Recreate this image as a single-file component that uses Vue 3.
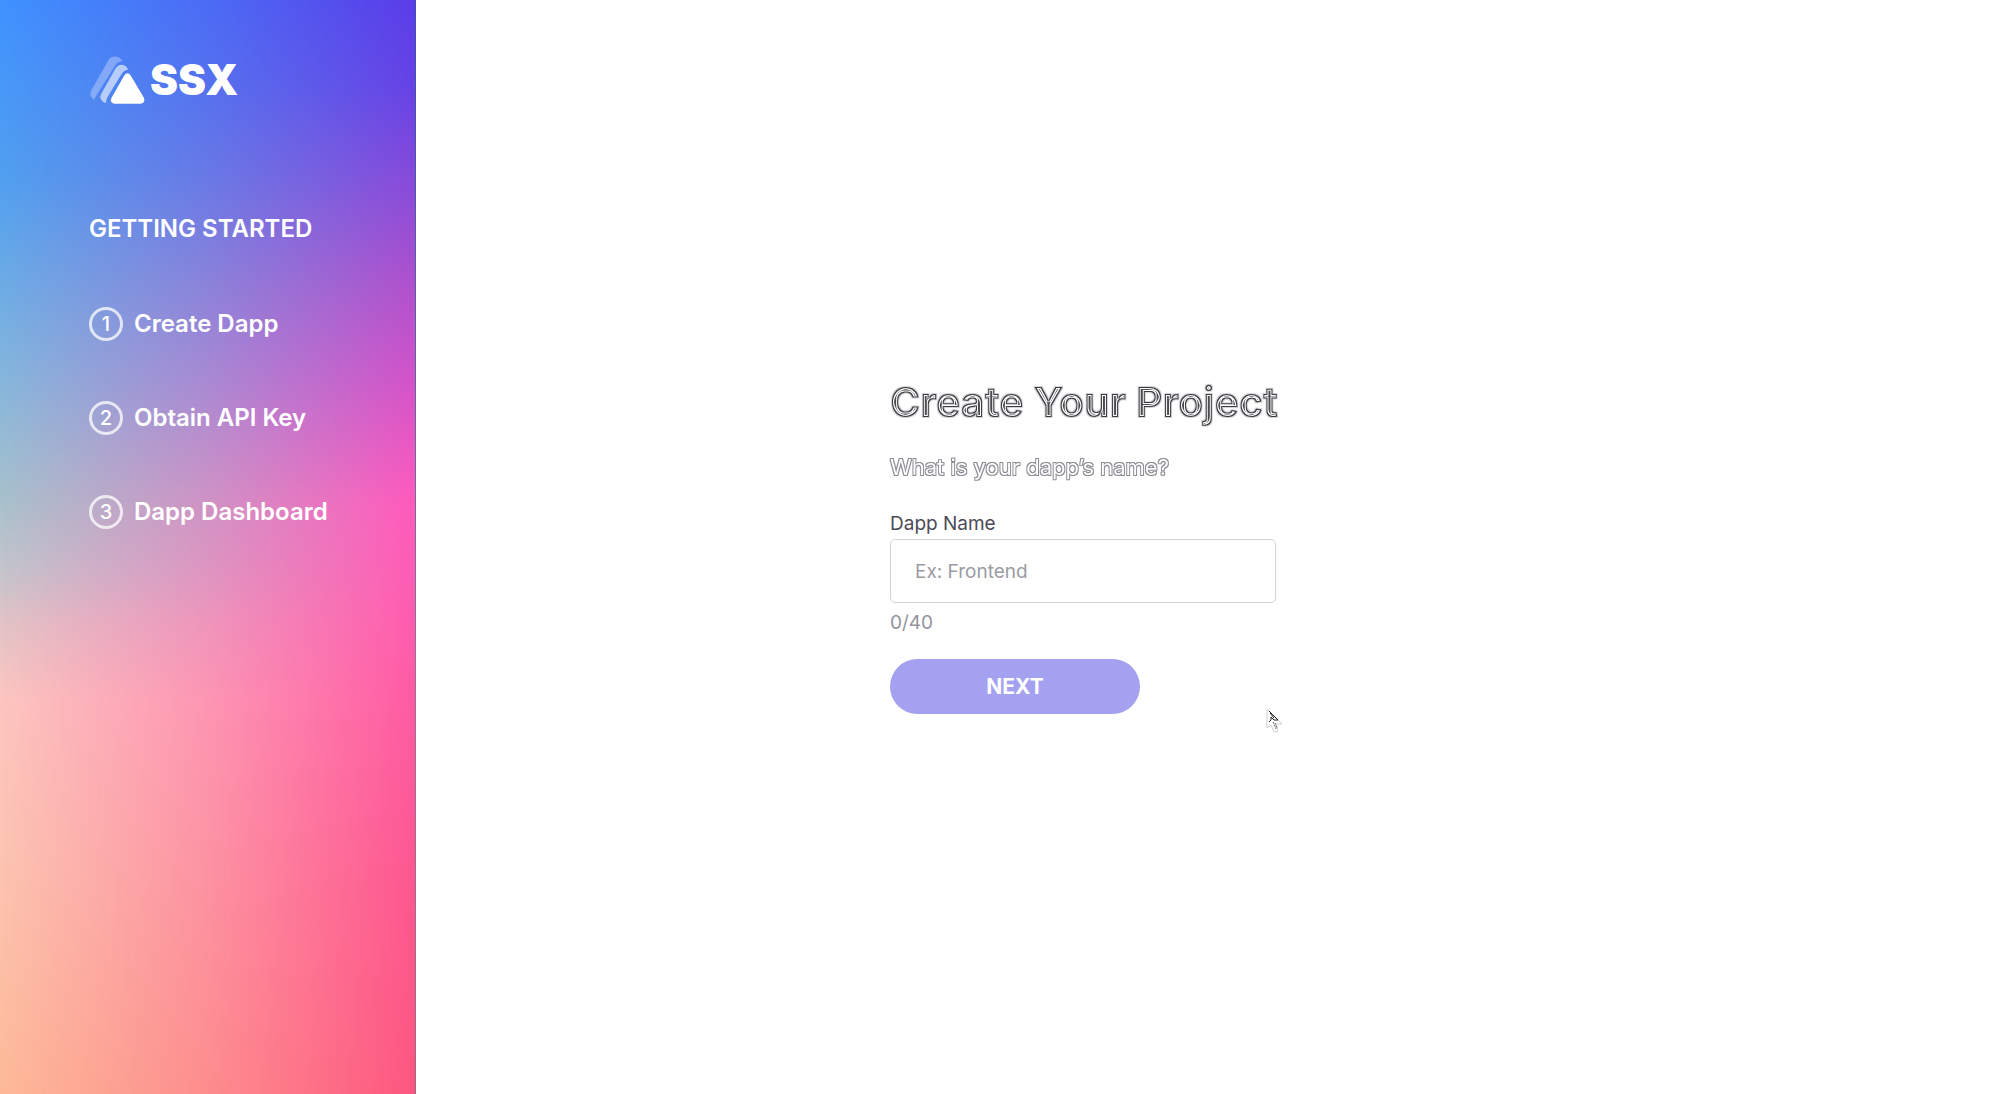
<script setup>
import { computed, ref } from 'vue'

const steps = ['Create Dapp', 'Obtain API Key', 'Dapp Dashboard']
const limit = 40
const dappName = ref('')
const count = computed(() => `${dappName.value.length}/${limit}`)
</script>

<template>
  <div class="page">
    <!-- Filters that etch contour lines into text -->
    <svg class="defs" aria-hidden="true">
      <filter id="etch-heavy" x="-2%" y="-10%" width="104%" height="120%" color-interpolation-filters="sRGB">
        <feMorphology in="SourceAlpha" operator="dilate" radius="1" result="outer" />
        <feFlood flood-color="#d4d4d8" />
        <feComposite in2="outer" operator="in" result="halo" />
        <feMorphology in="SourceAlpha" operator="erode" radius="1" result="inner" />
        <feFlood flood-color="#3c3c40" />
        <feComposite in2="SourceAlpha" operator="in" result="line" />
        <feFlood flood-color="#fff" />
        <feComposite in2="inner" operator="in" result="gap" />
        <feMorphology in="SourceAlpha" operator="erode" radius="2" result="deep" />
        <feFlood flood-color="#4c4c50" />
        <feComposite in2="deep" operator="in" result="core" />
        <feMerge>
          <feMergeNode in="halo" />
          <feMergeNode in="line" />
          <feMergeNode in="gap" />
          <feMergeNode in="core" />
        </feMerge>
      </filter>
      <filter id="etch-light" x="-2%" y="-10%" width="104%" height="120%" color-interpolation-filters="sRGB">
        <feMorphology in="SourceAlpha" operator="dilate" radius="1" result="outer" />
        <feComposite in="outer" in2="SourceAlpha" operator="out" result="ring" />
        <feFlood flood-color="#8c8c94" />
        <feComposite in2="ring" operator="in" />
      </filter>
    </svg>

    <aside class="sidebar">
      <div class="brand">
        <svg class="logo" viewBox="0 0 58 52" aria-hidden="true">
          <path fill="#fff" fill-opacity=".3" d="M6 46 L3 42.500 Q1.600 40 3 37 L20.500 6 Q23 2.600 27 2.600 Q32 2.600 34.500 7.200 Q30 7.500 27.500 11 L8 42 Z" />
          <path fill="#fff" fill-opacity=".6" d="M18 49 Q14 48 12.700 45 Q11.700 42.500 13.200 40 L27.500 14.500 Q29.800 10.700 33.500 10.700 Q38 10.700 40.300 15.500 Q36 16 33.500 20 L19.500 43 Q18 46 18 49 Z" />
          <path fill="#fff" d="M36.300 21.500 Q39.500 17 42.700 21.500 L55.700 43.500 Q58 48.700 52.500 49.700 H26.500 Q21.200 48.700 23.700 43.500 Z" />
        </svg>
        <span class="wordmark">SSX</span>
      </div>
      <h2 class="heading">GETTING STARTED</h2>
      <ol class="steps">
        <li v-for="(step, i) in steps" :key="step" class="step">
          <span class="number">{{ i + 1 }}</span>
          <span>{{ step }}</span>
        </li>
      </ol>
    </aside>

    <main class="content">
      <form class="form" @submit.prevent>
        <h1 class="title">Create Your Project</h1>
        <p class="question">What is your dapp’s name?</p>
        <label class="label" for="dapp-name">Dapp Name</label>
        <input id="dapp-name" v-model="dappName" class="field" type="text" placeholder="Ex: Frontend" :maxlength="limit" />
        <p class="count">{{ count }}</p>
        <button class="next" type="submit">NEXT</button>
        <svg class="pointer" viewBox="0 0 18 26" aria-hidden="true">
          <path d="M1 1 V20 L5 17 L8 24 L12 23 L10 16 H16 Z" fill="#fff" stroke="#d0d0d4" />
          <path d="M3 3 L12 12 H8 L5 9 V12 L3 14 M4 5 L8 10" fill="none" stroke="#222" />
          <path d="M7 14 L10 21 M9 15 L11 20" fill="none" stroke="#666" stroke-dasharray="2 1" />
        </svg>
      </form>
    </main>
  </div>
</template>

<style>
body {
  margin: 0;
}
</style>

<style scoped>
.page {
  display: flex;
  min-height: 100vh;
  background: #fff;
  font-family: Inter, "Liberation Sans", sans-serif;
}

.page * {
  box-sizing: border-box;
}

.defs {
  position: absolute;
  width: 0;
  height: 0;
}

.sidebar {
  position: relative;
  isolation: isolate;
  flex: none;
  width: 416px;
  padding: 54px 40px 54px 88px;
  border-right: 1px solid rgba(60, 0, 90, 0.45);
  color: #fff;
  background: linear-gradient(#3f92ff 0%, #50a0f0 16%, #80b5de 33%, #a8c2cc 46%, #c2c5cc 52%, #e2c4c6 57%, #fcc6c0 64%, #fcc4b0 80%, #fdba98 100%) border-box;
}

/* Warm right side, faded in over the cool left side */
.sidebar::before {
  content: "";
  position: absolute;
  inset: 0;
  z-index: -1;
  background: linear-gradient(#5a3ce8 0%, #6742e4 8%, #8a4ad8 17%, #b050cc 26%, #d452c8 35%, #ff5abc 46%, #ff5cb0 55%, #fe5aa0 66%, #fd5690 80%, #fd5680 100%);
  mask-image: linear-gradient(to right, transparent, rgba(0, 0, 0, 0.45) 50%, #000);
}

.brand {
  display: flex;
  align-items: center;
  gap: 4px;
  height: 52px;
}

.logo {
  width: 58px;
  height: 52px;
}

.wordmark {
  font-size: 42px;
  font-weight: 900;
  line-height: 52px;
}

.heading {
  margin: 107px 0 0 1px;
  font-size: 24px;
  font-weight: 600;
  line-height: 32px;
}

.steps {
  display: grid;
  gap: 60px;
  margin: 62px 0 0 1px;
  padding: 0;
  list-style: none;
}

.step {
  display: flex;
  align-items: center;
  gap: 11px;
  font-size: 24px;
  font-weight: 600;
  line-height: 34px;
}

.number {
  width: 34px;
  height: 34px;
  border: 3px solid rgba(255, 255, 255, 0.75);
  border-radius: 50%;
  font-size: 20px;
  font-weight: 500;
  line-height: 28px;
  text-align: center;
}

.content {
  display: grid;
  flex: 1;
  place-items: center;
  padding: 40px 24px;
}

.form {
  position: relative;
  display: flex;
  flex-direction: column;
  align-items: flex-start;
  width: 100%;
  max-width: 636px;
}

.title {
  margin: 0;
  font-size: 41px;
  font-weight: 700;
  line-height: 44px;
  filter: url(#etch-heavy);
}

.question {
  margin: 28px 0 0;
  font-size: 22px;
  font-weight: 400;
  line-height: 30px;
  filter: url(#etch-light);
}

.label {
  margin-top: 30px;
  color: #4b4b57;
  font-size: 19px;
  line-height: 24px;
}

.field {
  width: 386px;
  max-width: 100%;
  height: 64px;
  margin-top: 3px;
  padding: 0 24px;
  border: 1px solid #d2d2da;
  border-radius: 5px;
  background: #fff;
  color: #4b4b57;
  font: inherit;
  font-size: 19px;
}

.field::placeholder {
  color: #9b9ba5;
  opacity: 1;
}

.count {
  margin: 8px 0 0;
  color: #9292a0;
  font-size: 19px;
  line-height: 24px;
}

.next {
  width: 250px;
  height: 55px;
  margin-top: 24px;
  border: 0;
  border-radius: 28px;
  background: #a4a2f0;
  color: #fff;
  font: inherit;
  font-size: 21px;
  font-weight: 700;
}

.pointer {
  position: absolute;
  bottom: -20px;
  left: 376px;
  width: 18px;
  height: 26px;
}
</style>
